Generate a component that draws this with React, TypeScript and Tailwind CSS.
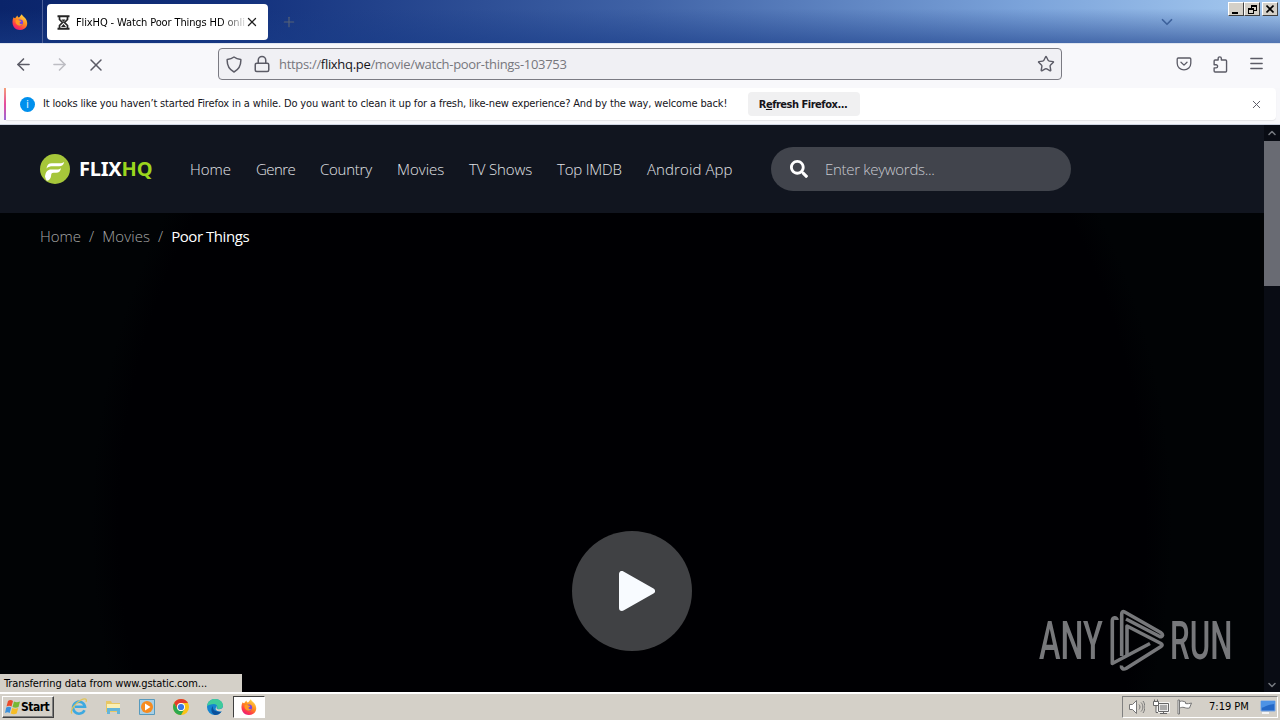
import { ArrowLeft, ArrowRight, ChevronDown, ChevronUp, Lock, Menu, Plus, Star, X } from 'lucide-react';
import { FaSearch } from 'react-icons/fa';
import clsx from 'clsx';

const navItems = [
    { label: 'Home', className: 'w-[66px]' },
    { label: 'Genre', className: 'w-[64px] tracking-[-0.55px]' },
    { label: 'Country', className: 'w-[77px] tracking-[-0.25px]' },
    { label: 'Movies', className: 'w-[72px]' },
    { label: 'TV Shows', className: 'w-[88px] tracking-[-0.12px]' },
    { label: 'Top IMDB', className: 'w-[90px] tracking-[-0.2px]' },
    { label: 'Android App', className: 'w-[124px] tracking-[0.1px]' },
];

function FirefoxIcon({ className }: { className?: string }) {
    return (
        <svg viewBox="0 0 16 16" className={className}>
            <defs>
                <linearGradient id="fox" x1="0.8" y1="0" x2="0.2" y2="1">
                    <stop offset="0" stopColor="#ffe14a" />
                    <stop offset="0.45" stopColor="#ff8a1e" />
                    <stop offset="0.75" stopColor="#ff3b4a" />
                    <stop offset="1" stopColor="#e31587" />
                </linearGradient>
            </defs>
            <path d="M1.6 3.2c.5.6 1 .9 1.6 1 .7-1 1.3-2 2.3-2.7 0 1 .5 1.600 1.400 2C8 3 8.500 1.500 9.800.3c.4 1.700 2.200 2.400 3.500 4 2.800 3.700 2.600 8.200-1 10.400-3.700 2.200-8.500 1.300-10.600-2C-.1 9.700.2 6 1.600 3.200z" fill="url(#fox)" />
            <circle cx="8" cy="8.600" r="3.100" fill="#7542e5" />
            <path d="M3.600 6.200c1.300-.9 3-.6 4 .4l1.900.3c-.4 1-1.600 1-1.900 1.600-.2 1.300 1.400 2.200 3 1.300-1 2.200-4.400 2.500-6 .5-1-1.200-1.300-2.700-1-4.100z" fill="#ff9a22" />
        </svg>
    );
}

function WindowButton({ children, className }: { children: React.ReactNode; className?: string }) {
    return (
        <div className={clsx('flex h-[14px] w-[16px] items-center justify-center border border-t-white border-l-white border-r-[#404040] border-b-[#404040] bg-[#d4d0c8]', className)}>
            {children}
        </div>
    );
}

function TitleBar() {
    return (
        <div className="flex h-[43px] shrink-0 items-start bg-[linear-gradient(90deg,#0a246a_0%,#12307c_18%,#3f62a6_50%,#7ba3da_80%,#a6caf0_100%)]">
            <div className="flex h-full w-full items-start bg-[linear-gradient(180deg,transparent_20%,rgba(25,60,135,0.6)_100%)]">
                <div className="flex h-full w-[43px] items-center justify-center border-r border-[#4d619a]">
                    <FirefoxIcon className="mr-[3px] h-4 w-4" />
                </div>
                <div className="mt-1 ml-1 flex h-9 w-[221px] items-center rounded bg-white pl-[10px]">
                    <svg viewBox="0 0 13 15" className="h-[15px] w-[13px] shrink-0" fill="none" stroke="#252525">
                        <path d="M.5 1.200h12M.5 13.800h12" strokeWidth="2" />
                        <path d="M2.500 2v2.500l3 3-3 3V13M10.500 2v2.500l-3 3 3 3V13" strokeWidth="1.700" />
                        <path d="M4.500 4.500h4l-2 2.500zM6.500 9l2.500 3H4z" fill="#252525" stroke="none" />
                    </svg>
                    <span className="mt-[2px] ml-[6px] w-[169px] overflow-hidden whitespace-nowrap bg-[linear-gradient(90deg,#000_145px,#d0d0d0_168px)] bg-clip-text text-[11px] tracking-[-0.12px] text-transparent">
                        FlixHQ - Watch Poor Things HD onli
                    </span>
                    <X size={14} strokeWidth={2.200} className="shrink-0 text-[#202020]" />
                </div>
                <Plus size={16} strokeWidth={1.700} className="mt-[14px] ml-[13px] text-[#566277]" />
                <div className="flex-1" />
                <ChevronDown size={18} strokeWidth={2.300} className="mt-[13px] mr-[52px] text-[#3e629c]" />
                <div className="mt-[2px] mr-[2px] flex">
                    <WindowButton>
                        <div className="mt-[7px] mr-[2px] h-[2px] w-[6px] bg-black" />
                    </WindowButton>
                    <WindowButton>
                        <svg viewBox="0 0 9 9" className="h-[9px] w-[9px]" fill="none" stroke="#000" shapeRendering="crispEdges">
                            <path d="M3 3V.5h5.500v5H6M3 1.500h5" />
                            <path d="M.5 3.500h5v5h-5zM.5 4.500h5" />
                        </svg>
                    </WindowButton>
                    <WindowButton className="ml-[2px]">
                        <svg viewBox="0 0 8 8" className="h-2 w-2" stroke="#000" strokeWidth="1.600">
                            <path d="M.5.5l7 7M7.500.5l-7 7" />
                        </svg>
                    </WindowButton>
                </div>
            </div>
        </div>
    );
}

function Toolbar() {
    return (
        <div className="flex h-[45px] shrink-0 items-start border-t border-[#dfe5ef] bg-[#f8f8fb] text-[#5b5b66]">
            <ArrowLeft size={19} strokeWidth={2} className="mt-[11px] ml-[14px]" />
            <ArrowRight size={19} strokeWidth={2} className="mt-[11px] ml-[17px] text-[#bdbdc3]" />
            <X size={20} strokeWidth={1.800} className="mt-[11px] ml-[17px]" />
            <div className="mt-1 ml-[112px] flex h-8 w-[844px] items-center rounded border border-[#7b7b83] bg-[#f0f0f4] pl-[7px]">
                <svg viewBox="0 0 16 17" className="h-[17px] w-4" fill="none" stroke="currentColor" strokeWidth="1.500" strokeLinejoin="round">
                    <path d="M8 1c2 1.500 4.500 2.200 6.800 2.500.3 5.500-1.800 10-6.800 12.500C3 13.500.9 9 1.200 3.500 3.500 3.200 6 2.500 8 1z" />
                </svg>
                <Lock size={18} strokeWidth={2} className="ml-[11px]" />
                <span className="mt-[2px] ml-[8px] flex-1 whitespace-nowrap font-['Open_Sans',sans-serif] text-[13px] tracking-[-0.31px] text-[#77777d]">
                    https://<span className="text-[#15141a]">flixhq.pe</span>/movie/watch-poor-things-103753
                </span>
                <Star size={18} strokeWidth={1.900} className="mr-[6px]" />
            </div>
            <div className="flex-1" />
            <svg viewBox="0 0 16 16" className="mt-[12px] h-4 w-4" fill="none" stroke="currentColor" strokeWidth="1.300" strokeLinecap="round" strokeLinejoin="round">
                <path d="M2.300 2h11.400c.7 0 1.100.4 1.100 1.100v4.200a6.800 6.600 0 0 1-13.600 0V3.100C1.200 2.400 1.600 2 2.300 2z" />
                <path d="M5 6.200l3 2.900 3-2.900" />
            </svg>
            <svg viewBox="0 0 16 16" className="mt-[12px] ml-[20px] h-[17px] w-[17px]" fill="none" stroke="currentColor" strokeWidth="1.300" strokeLinejoin="round">
                <path d="M2 6V4.700c0-.6.3-.9.9-.9h2.900V2.300a1.500 1.500 0 0 1 3 0v1.500h4c.6 0 .9.3.9.9v9.500c0 .6-.3.9-.9.9H2.900c-.6 0-.9-.3-.9-.9v-3h1.800a1.500 1.500 0 0 0 0-3H2z" />
            </svg>
            <Menu size={17} strokeWidth={1.900} className="mt-[11px] mr-[15px] ml-[19px]" />
        </div>
    );
}

function NotificationBar() {
    return (
        <div className="flex h-[37px] shrink-0 items-start border-b border-[#ced4e2] bg-[#f7f7fa] pl-1">
            <div className="h-8 w-[2px] bg-[linear-gradient(180deg,#f5a07a,#e74b9e,#9a68d8)]" />
            <div className="flex h-8 w-[1270px] items-center rounded-r bg-white shadow-[0_1px_1px_rgba(0,0,0,0.08)]">
                <div className="ml-[14px] flex h-[15px] w-[15px] items-center justify-center rounded-full bg-[#0090ed] text-[10px] text-white">
                    i
                </div>
                <span className="ml-[8px] w-[705px] whitespace-nowrap text-[11px] tracking-[-0.147px] text-[#15141a]">
                    It looks like you haven’t started Firefox in a while. Do you want to clean it up for a fresh, like-new experience? And by the way, welcome back!
                </span>
                <button className="h-6 w-[112px] whitespace-nowrap rounded bg-[#f0f0f1] pt-[2px] pr-[2px] text-[11px] font-bold tracking-[-0.48px] text-[#15141a]">
                    R<span className="underline">e</span>fresh Firefox...
                </button>
                <div className="flex-1" />
                <X size={13} strokeWidth={1.800} className="mr-[13px] text-[#5b5b66]" />
            </div>
        </div>
    );
}

function SiteHeader() {
    return (
        <header className="flex h-[88px] shrink-0 items-center bg-[#11151f] pl-10">
            <svg viewBox="0 0 30 30" className="h-[30px] w-[30px]">
                <circle cx="15" cy="15" r="15" fill="#a6c63a" />
                <path d="M6.500 14.500c.5-3.500 2-5.200 5.300-5.200h8c1.800 0 3-.5 4.400-1.300-.8 3-2.200 4.300-5 4.300h-6.200c-3 0-4.500.4-6.500 2.200z" fill="#fff" />
                <path d="M5 22.500c.5-4.500 2.500-7 6.300-7h5.500c1.800 0 2.900-.4 4.200-1.300-.6 3-2.100 4.500-4.800 4.500h-2.600c-1.800 0-2.300.7-2.500 2.700-.2 3-1.600 4.800-4.200 5.300-.7-.7-1.500-2.300-1.900-4.200z" fill="#fff" />
            </svg>
            <div className="ml-[9px] w-[111px] font-['Noto_Sans',sans-serif] text-[20px] leading-none font-bold tracking-[-0.2px] text-white">
                FLIX<span className="text-[#9bd51e]">HQ</span>
            </div>
            <nav className="flex font-['Open_Sans',sans-serif] text-[15px] font-light text-[#e2e4e8]">
                {navItems.map((item) => (
                    <a key={item.label} className={clsx('whitespace-nowrap', item.className)}>{item.label}</a>
                ))}
            </nav>
            <div className="flex h-11 w-[300px] items-center rounded-full bg-[#41444c] pl-[19px]">
                <FaSearch size={18} className="text-white" />
                <span className="ml-[17px] font-['Open_Sans',sans-serif] text-[15px] font-light tracking-[-0.3px] text-[#c8cad0]">Enter keywords...</span>
            </div>
        </header>
    );
}

function Watermark() {
    return (
        <div className="absolute top-[484px] left-[1039px] flex h-[64px] items-center font-['Roboto',sans-serif] text-[53px] leading-none font-medium text-[#77787b]">
            <div className="w-[70px]">
                <span className="inline-block origin-left scale-x-[0.61]">ANY</span>
            </div>
            <svg viewBox="0 0 56 64" className="h-[64px] w-[56px] shrink-0" fill="none" stroke="currentColor" strokeWidth="3.600" strokeLinejoin="round">
                <path d="M8 11C8 8 3.300 8 3.300 12v42.500L41 34.500" />
                <path d="M12.700 47V5c0-2 1-3 3-2l36 20.500c3 2 2 5-1 4L17 10" />
                <path d="M18 46V17l34 17.500c1.500 1 1.500 2 0 3L17 59.500c-3 1.500-5-.5-4.500-3" />
            </svg>
            <div className="ml-[5px] w-[62px]">
                <span className="inline-block origin-left scale-x-[0.59]">RUN</span>
            </div>
        </div>
    );
}

function Page() {
    return (
        <div className="relative flex h-[567px] shrink-0 bg-black">
            <main className="flex w-[1264px] flex-col bg-[radial-gradient(ellipse_540px_620px_at_632px_400px,#000003_95%,#010305_100%)]">
                <SiteHeader />
                <div className="mt-[12px] flex gap-2 pl-10 font-['Open_Sans',sans-serif] text-[15px] font-light text-[#a8a8a8]">
                    <span>Home</span>
                    <span>/</span>
                    <span className="tracking-[0.1px]">Movies</span>
                    <span>/</span>
                    <span className="font-normal tracking-[-0.45px] text-white">Poor Things</span>
                </div>
                <div className="mt-[283px] flex h-[120px] w-[120px] items-center justify-center self-center rounded-full bg-[#404144]">
                    <svg viewBox="0 0 36 40" className="ml-[10px] h-10 w-9">
                        <path d="M3 3v34L33 20z" fill="#f8fbff" stroke="#f8fbff" strokeWidth="6" strokeLinejoin="round" />
                    </svg>
                </div>
            </main>
            <div className="flex w-4 flex-col items-center justify-between bg-[#090c14]">
                <div className="flex w-full flex-col items-center">
                    <ChevronUp size={12} strokeWidth={3} className="my-[2px] text-[#777a80]" />
                    <div className="h-[145px] w-full bg-[#696b73]" />
                </div>
                <ChevronDown size={12} strokeWidth={3} className="mb-[1px] text-[#777a80]" />
            </div>
            <Watermark />
            <div className="absolute bottom-0 left-0 flex h-[18px] w-[242px] items-center bg-[#d4d0c8] pt-[3px] pl-1 text-[11px] tracking-[-0.1px] whitespace-nowrap text-black">
                Transferring data from www.gstatic.com...
            </div>
        </div>
    );
}

function QuickLaunch() {
    return (
        <div className="ml-[16px] flex items-center gap-[16px]">
            <svg viewBox="0 0 18 18" className="h-[18px] w-[18px]" fill="none">
                <path d="M14.500 12.200A6 6 0 1 1 15 8.800H5" stroke="#3da9e0" strokeWidth="2.600" />
                <path d="M2 15.500C-.5 13 5 5 11 2c5-2.500 6-.5 5 2" stroke="#e1c458" strokeWidth="1.300" />
            </svg>
            <svg viewBox="0 0 18 18" className="h-[18px] w-[18px]">
                <path d="M2 3h5l1 2h8v9H2z" fill="#e8c765" />
                <path d="M3 6h13v4H3z" fill="#faf0b4" />
                <path d="M3 10h13v6h-3v-3H6v3H3z" fill="#64b5d9" />
            </svg>
            <svg viewBox="0 0 18 18" className="h-[18px] w-[18px]">
                <path d="M1.500 1.500h15v15h-15z" fill="#a8cfe5" stroke="#579abd" />
                <circle cx="9" cy="9" r="6" fill="#f68b1f" />
                <path d="M7 5.500v7L12.500 9z" fill="#fff" />
            </svg>
            <svg viewBox="0 0 18 18" className="h-[18px] w-[18px]">
                <circle cx="9" cy="9" r="8" fill="#fbc316" />
                <path d="M2.100 5A8 8 0 0 1 16 5H9a4 4 0 0 0-3.500 6z" fill="#e33b2e" />
                <path d="M2.100 5A8 8 0 0 0 9 17l3.500-6a4 4 0 0 1-7 0z" fill="#2da94f" />
                <circle cx="9" cy="9" r="4" fill="#fff" />
                <circle cx="9" cy="9" r="3.100" fill="#3978e6" />
            </svg>
            <svg viewBox="0 0 18 18" className="h-[18px] w-[18px]">
                <circle cx="9" cy="9" r="8" fill="#1685cf" />
                <path d="M1 8C2 3 5 1 9 1c5 0 8 3 8 6.500 0 3-3 4.500-6 3 1-1.500 0-4.500-3-4.500S2.500 7 1 8z" fill="#3fcb9b" />
                <path d="M7 8c-1 4 3 6.500 8.500 5.500-1.500 2.500-4 3.500-6.500 3.500-3.500-1-5-6-2-9z" fill="#0b519c" />
                <path d="M10.500 8c.7 1-.5 2 .5 2.700 2 1 5 .6 6-1.700v4c-2 1-7 .5-7.500-2z" fill="#d4d0c8" />
            </svg>
        </div>
    );
}

function Taskbar() {
    return (
        <div className="flex h-7 shrink-0 items-center border-t-2 border-white bg-[#d4d0c8] text-black">
            <div className="ml-[2px] flex h-[22px] w-[52px] items-center border border-t-white border-l-white border-r-[#404040] border-b-[#404040] pl-[2px] text-[12px] font-bold tracking-[-0.5px] shadow-[inset_-1px_-1px_#808080]">
                <svg viewBox="0 0 16 16" className="h-4 w-4 shrink-0">
                    <path d="M3 2c2-1.500 3.500-1 5 0L6.500 7.500C5 6.500 3.500 6.500 1.500 7.500z" fill="#ea4b2a" />
                    <path d="M9 2.500c2 1 3.500 1 6 0L13.500 8c-2 1-4 1-6 0z" fill="#77b834" />
                    <path d="M1.200 8.500c2-1 3.500-1 5 0L4.700 14C3.200 13 1.700 13 0 14z" fill="#3b91dd" />
                    <path d="M7.200 9c2 1 4 1 6 0l-1.500 5.500c-2 1-4 1-6 0z" fill="#f7bd26" />
                </svg>
                <span>Start</span>
            </div>
            <QuickLaunch />
            <div className="ml-[9px] flex h-[22px] w-8 items-center justify-center border border-t-[#404040] border-l-[#404040] border-r-white border-b-white bg-white">
                <FirefoxIcon className="h-4 w-4" />
            </div>
            <div className="flex-1" />
            <div className="mr-[2px] flex h-[22px] w-[156px] items-center border border-t-[#808080] border-l-[#808080] border-r-white border-b-white pl-[6px]">
                <svg viewBox="0 0 16 16" className="h-4 w-4" fill="none" stroke="#777">
                    <path d="M.5 5.500h3l4-4v13l-4-4h-3z" fill="#fff" />
                    <path d="M10 5.500c1.300 1.500 1.300 3.500 0 5M12 3.500c2.500 2.500 2.500 6.500 0 9M14 2c2.500 3.500 2.500 8.500 0 12" />
                </svg>
                <svg viewBox="0 0 17 16" className="ml-[8px] h-4 w-[17px]" fill="none" stroke="#666">
                    <path d="M5.500 4.500h10v8h-10z" fill="#aaa" stroke="#fff" strokeWidth="2.500" />
                    <path d="M5.500 4.500h10v8h-10zM7 14.500h7M10.500 12.500v2" />
                    <path d="M.5 2.500h5v4h-5zM1.500.5v2M4.500.5v2M3 6.500v7h2" fill="#fff" />
                </svg>
                <svg viewBox="0 0 16 16" className="ml-[7px] h-4 w-4" fill="#fff" stroke="#777">
                    <path d="M2.500 2.500c3-1 4 0 6 .5v1.500c2 .5 4 0 6-.5l-2 5c-2 .5-3.500 0-5.500-.5-1.500-.5-3 0-4.500.5zM1 1v14h1.500V1z" />
                </svg>
                <span className="mt-[1px] ml-[16px] w-[51px] text-[11px] whitespace-nowrap">7:19 PM</span>
                <svg viewBox="0 0 16 14" className="h-[14px] w-4">
                    <path d="M1 1h14v10H1z" fill="#2468c7" stroke="#7aa8e6" />
                    <path d="M1 1h14v3C9 4 5 7 1 8z" fill="#4d92e5" />
                    <path d="M2 12h7v2H2z" fill="#f4f4f4" />
                </svg>
            </div>
        </div>
    );
}

export default function App() {
    return (
        <div className="flex h-[720px] w-[1280px] flex-col overflow-hidden bg-black font-['DejaVu_Sans_Condensed','DejaVu_Sans',sans-serif]">
            <TitleBar />
            <Toolbar />
            <NotificationBar />
            <Page />
            <Taskbar />
        </div>
    );
}
